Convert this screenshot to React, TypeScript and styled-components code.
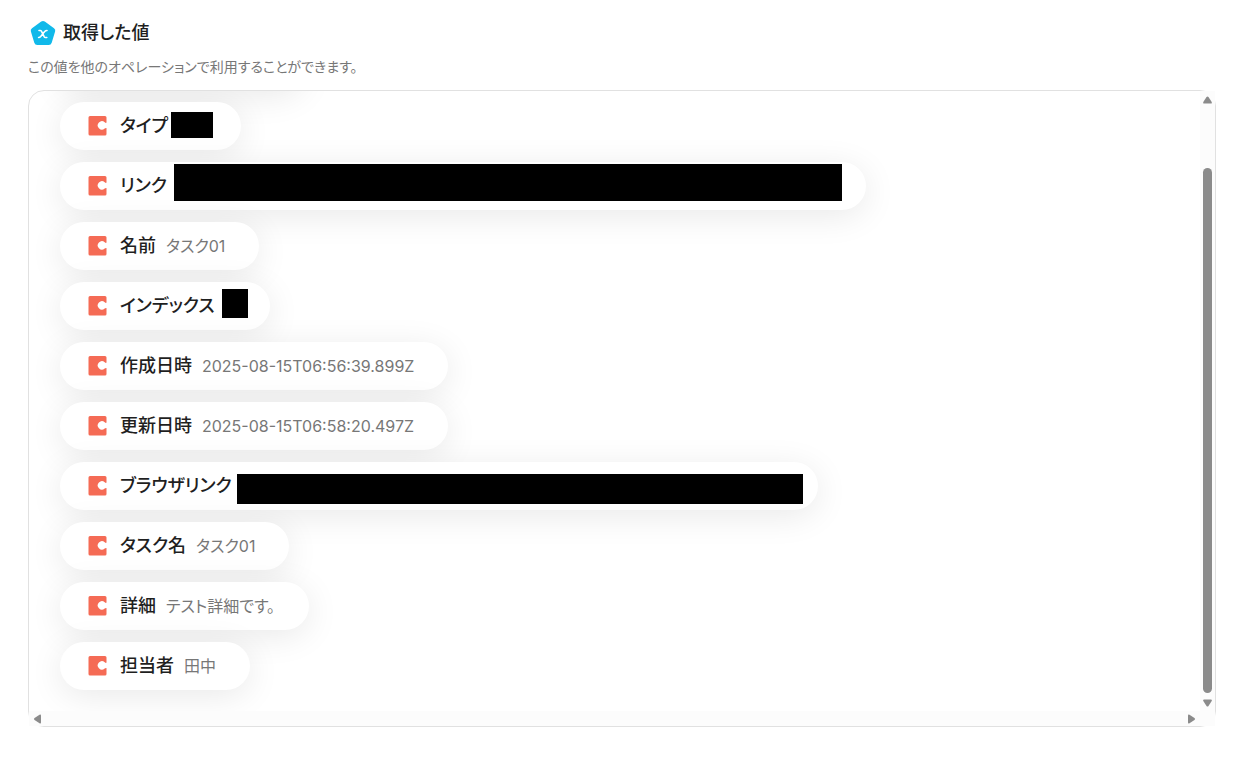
import React from "react";
import styled, { createGlobalStyle } from "styled-components";

const GlobalStyle = createGlobalStyle`
  * { box-sizing: border-box; }
  body {
    margin: 0;
    background: #fff;
    color: #1f1f1f;
    font-family: Inter, "Noto Sans CJK JP", sans-serif;
    font-feature-settings: "palt";
  }
`;

const Page = styled.main`
  padding: 20px 32px 36px 28px;
`;

const Header = styled.header`
  display: flex;
  align-items: center;
  gap: 6px;
  height: 26px;
  padding-left: 1px;
`;

const Title = styled.h1`
  margin: 0;
  font-size: 18px;
  line-height: 26px;
  font-weight: 500;
`;

const Description = styled.p`
  margin: 11px 0 13px;
  font-size: 14px;
  line-height: 20px;
  color: #777;
`;

const Panel = styled.section`
  display: grid;
  grid-template-columns: minmax(0, 1fr) 15px;
  grid-template-rows: auto 15px;
  border: 1px solid #e1e1e1;
  border-radius: 16px;
`;

const Viewport = styled.div`
  overflow: hidden;
  border-top-left-radius: 15px;
`;

const List = styled.ul`
  display: flex;
  flex-direction: column;
  align-items: flex-start;
  gap: 12px;
  margin: -49px 0 0;
  padding: 0 31px 21px;
  list-style: none;
`;

const Pill = styled.li<{ $end?: number }>`
  display: flex;
  align-items: center;
  height: 48px;
  padding: 0 ${(p) => p.$end ?? 34}px 0 28px;
  border-radius: 24px;
  background: #fff;
  box-shadow: 0 6px 34px rgba(0, 0, 0, 0.09);
`;

const ScrolledPill = styled(Pill)`
  width: 244px;
`;

const Label = styled.span`
  margin-left: 12px;
  font-size: 18px;
  line-height: 24px;
  font-weight: 500;
  white-space: nowrap;
`;

const Value = styled.span`
  margin-left: 10px;
  padding-bottom: 1px;
  font-size: 16px;
  line-height: 24px;
  color: #777;
  white-space: nowrap;
`;

const Mask = styled.span<{ $w: number; $h: number; $top: number; $gap: number }>`
  align-self: flex-start;
  flex: none;
  width: ${(p) => p.$w}px;
  height: ${(p) => p.$h}px;
  margin: ${(p) => p.$top}px 0 0 ${(p) => p.$gap}px;
  background: #000;
`;

const Track = styled.div<{ $horizontal?: boolean }>`
  display: flex;
  flex-direction: ${(p) => (p.$horizontal ? "row" : "column")};
  align-items: center;
  justify-content: space-between;
  padding: ${(p) => (p.$horizontal ? "0 4px" : "5px 0 4px")};
  background: #fcfcfc;
`;

const Thumb = styled.div`
  flex: 1;
  width: 9px;
  margin: 64px 0 6px;
  border-radius: 5px;
  background: #8b8b8b;
`;

const Corner = styled.div`
  background: #fcfcfc;
`;

const BadgeIcon = () => (
  <svg width="28" height="26" viewBox="0 0 28 26" aria-hidden="true">
    <path
      d="M12.2 1.6Q14 .4 15.8 1.6L25 8.2Q26.8 9.5 26.1 11.6L22.7 22.7Q22 24.9 19.7 24.9H8.3Q6 24.9 5.3 22.7L1.9 11.6Q1.2 9.5 3 8.2Z"
      fill="#11b9ea"
    />
    <path
      d="M10 10.500H11.300Q12 10.500 12.400 11.200L15.300 16.800Q15.700 17.500 16.400 17.500H17.800M18 10.500Q16.600 10.500 15.700 11.600L11.700 16.500Q10.800 17.500 9.600 17.500"
      fill="none"
      stroke="#fff"
      strokeWidth="1.6"
      strokeLinecap="round"
    />
  </svg>
);

const BlockIcon = () => (
  <svg width="20" height="20" viewBox="0 0 20 20" aria-hidden="true">
    <path
      d="M2 0H17Q18.500 0 18.500 1.500V6.600C18.100 7.200 17.400 6.800 16.700 6.200A4.200 4.200 0 1 0 16.700 12.600C17.400 12 18.100 11.700 18.500 12.300V18Q18.500 19.500 17 19.500H2Q.5 19.500 .5 18V1.500Q.5 0 2 0Z"
      fill="#f56b55"
    />
  </svg>
);

const Arrow = ({ angle }: { angle: number }) => (
  <svg width="9" height="8" viewBox="-4.500 -4 9 8" overflow="visible" aria-hidden="true">
    <path
      d="M-1 -3Q0 -4.200 1 -3L4.200 2Q5 3.500 3.500 3.500H-3.500Q-5 3.500 -4.200 2Z"
      fill="#8b8b8b"
      transform={`rotate(${angle})`}
    />
  </svg>
);

type Row = {
  label: string;
  value?: string;
  mask?: { w: number; h: number; top: number; gap: number; end: number };
};

const rows: Row[] = [
  { label: "タイプ", mask: { w: 42, h: 26, top: 10, gap: 3, end: 28 } },
  { label: "リンク", mask: { w: 668, h: 37, top: 2, gap: 7, end: 24 } },
  { label: "名前", value: "タスク01" },
  { label: "インデックス", mask: { w: 26, h: 29, top: 7, gap: 7, end: 22 } },
  { label: "作成日時", value: "2025-08-15T06:56:39.899Z" },
  { label: "更新日時", value: "2025-08-15T06:58:20.497Z" },
  { label: "ブラウザリンク", mask: { w: 566, h: 30, top: 12, gap: 5, end: 15 } },
  { label: "タスク名", value: "タスク01" },
  { label: "詳細", value: "テスト詳細です。" },
  { label: "担当者", value: "田中" },
];

export default function App() {
  return (
    <>
      <GlobalStyle />
      <Page>
        <Header>
          <BadgeIcon />
          <Title>取得した値</Title>
        </Header>
        <Description>この値を他のオペレーションで利用することができます。</Description>
        <Panel>
          <Viewport>
            <List>
              <ScrolledPill aria-hidden="true" />
              {rows.map(({ label, value, mask }) => (
                <Pill key={label} $end={mask?.end}>
                  <BlockIcon />
                  <Label>{label}</Label>
                  {value && <Value>{value}</Value>}
                  {mask && <Mask $w={mask.w} $h={mask.h} $top={mask.top} $gap={mask.gap} />}
                </Pill>
              ))}
            </List>
          </Viewport>
          <Track>
            <Arrow angle={0} />
            <Thumb />
            <Arrow angle={180} />
          </Track>
          <Track $horizontal>
            <Arrow angle={-90} />
            <Arrow angle={90} />
          </Track>
          <Corner />
        </Panel>
      </Page>
    </>
  );
}
